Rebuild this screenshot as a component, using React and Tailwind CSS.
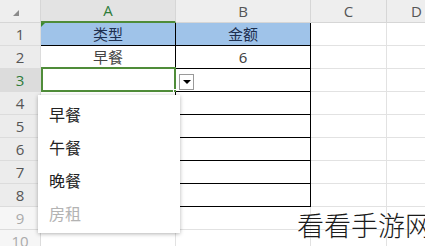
import React from "react";

const cols = [
  { label: "A", w: "w-[135px]" },
  { label: "B", w: "w-[135px]" },
  { label: "C", w: "w-[76px]" },
  { label: "D", w: "w-[60px]" },
];

const data = {
  1: ["类型", "金额"],
  2: ["早餐", "6"],
};

function Cell({ r, c }) {
  const inTable = r <= 8 && c <= 1;
  const header = r === 1 && c <= 1;
  const text = data[r] ? data[r][c] : null;
  const right = inTable ? "border-r-black" : "border-r-[#e2e2e2]";
  const bottom = inTable ? "border-b-black" : "border-b-[#e2e2e2]";
  return (
    <div
      className={`${cols[c].w} shrink-0 h-[23px] border-r border-b ${right} ${bottom} ${
        header ? "bg-[#9fc3e9] text-[#1d2f4f]" : "bg-white text-[#444]"
      } flex items-center justify-center text-[15px] leading-none relative`}
    >
      {text}
      {r === 1 && c === 0 && (
        <div className="absolute left-0 top-0 w-0 h-0 border-t-[4px] border-r-[4px] border-t-[#3b8a2e] border-r-transparent" />
      )}
      {r === 3 && c === 0 && (
        <div className="absolute left-0 top-[-2px] right-[-1px] bottom-[-1px] border-2 border-[#4f8c39]">
          <div className="absolute right-[-4px] bottom-[-4px] w-[5px] h-[5px] bg-[#4f8c39] border border-white" />
        </div>
      )}
    </div>
  );
}

export default function App() {
  const rows = [1, 2, 3, 4, 5, 6, 7, 8, 9, 10];
  return (
    <div
      className="w-[425px] h-[246px] overflow-hidden bg-white relative"
      style={{ fontFamily: '"Noto Sans", "Noto Sans CJK SC", sans-serif' }}
    >
      {/* column header */}
      <div className="flex h-[23px]">
        <div className="w-[41px] shrink-0 bg-[#eeeeee] border-r border-b border-[#d6d6d6] relative">
          <div className="absolute left-[13px] top-[10px] w-0 h-0 border-b-[6px] border-l-[6px] border-b-[#8a8a8a] border-l-transparent" />
        </div>
        {cols.map((c, i) => (
          <div
            key={c.label}
            className={`${c.w} shrink-0 flex items-center justify-center text-[15px] border-r border-[#d6d6d6] ${
              i === 0
                ? "bg-[#e3e3e3] text-[#2f7d3b] border-b-2 border-b-[#4f8c39]"
                : "bg-[#eeeeee] text-[#555] border-b"
            }`}
            style={{ fontFamily: '"Open Sans", sans-serif' }}
          >
            {c.label}
          </div>
        ))}
      </div>
      {rows.map((r) => (
        <div key={r} className="flex h-[23px]">
          <div
            className={`w-[41px] shrink-0 flex items-center justify-center text-[15px] border-r border-b border-[#dcdcdc] ${
              r === 3
                ? "bg-[#dcdcdc] text-[#2f7d3b]"
                : r <= 8
                ? "bg-[#ececec] text-[#555]"
                : "bg-[#f6f6f6] text-[#aaa]"
            }`}
            style={{ fontFamily: '"Open Sans", sans-serif' }}
          >
            {r}
          </div>
          {cols.map((c, i) => (
            <Cell key={c.label} r={r} c={i} />
          ))}
        </div>
      ))}

      {/* dropdown arrow button */}
      <div className="absolute left-[179px] top-[74px] w-[15px] h-[16px] bg-white border border-[#9a9a9a] flex items-center justify-center">
        <div className="w-0 h-0 border-t-[4px] border-l-[4px] border-r-[4px] border-t-black border-l-transparent border-r-transparent" />
      </div>

      {/* dropdown list */}
      <div
        className="absolute left-[38px] top-[95px] w-[142px] h-[138px] bg-white shadow-[0_1px_4px_rgba(0,0,0,0.3)] flex flex-col pt-[2px]"
        style={{ fontFamily: '"Noto Sans CJK SC", sans-serif' }}
      >
        {["早餐", "午餐", "晚餐"].map((t) => (
          <div key={t} className="h-[33px] flex items-center pl-[11px] text-[16px] text-[#222]">
            {t}
          </div>
        ))}
        <div className="h-[33px] flex items-center pl-[11px] text-[16px] text-[#b3b3b3]">房租</div>
      </div>

      {/* watermark */}
      <div
        className="absolute left-[297px] top-[211px] text-[27px] leading-none font-light text-[#1a1a1a] whitespace-nowrap"
        style={{
          fontFamily: '"Noto Sans CJK SC", sans-serif',
          textShadow: "0 0 2px #fff, 0 0 2px #fff",
        }}
      >
        看看手游网
      </div>
    </div>
  );
}
